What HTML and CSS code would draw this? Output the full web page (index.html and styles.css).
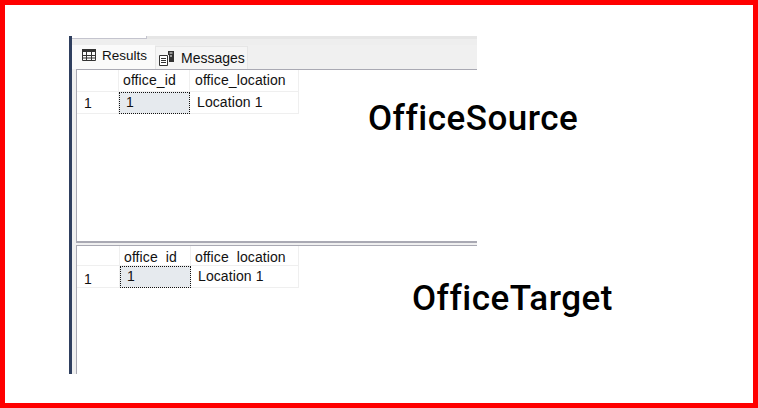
FILE: index.html
```html
<!DOCTYPE html>
<html lang="en">
<head>
    <meta charset="UTF-8">
    <title>OfficeSource and OfficeTarget</title>
    <link rel="stylesheet" href="styles.css">
</head>
<body>
    <div class="frame">
        <div class="window">
            <!-- Tabs -->
            <div class="top-strip"><div class="top-notch"></div></div>
            <div class="tabs">
                <div class="tab active">
                    <svg class="icon" width="14" height="12" viewBox="0 0 14 12">
                        <path d="M0.5 0.5h13v11h-13z" fill="none" stroke="#333"/>
                        <path d="M0 0h14v3h-14z" fill="#333"/>
                        <path d="M0 6.500h14M0 9h14M4.500 0v12M9.500 0v12" stroke="#333" fill="none"/>
                    </svg>
                    <span>Results</span>
                </div>
                <div class="tab">
                    <svg class="icon" width="15" height="15" viewBox="0 0 15 15">
                        <path d="M0.5 4.500h8v10h-8z" fill="#fff" stroke="#333"/>
                        <path d="M2 7.500h5M2 9.500h5M2 11.500h5" stroke="#333" fill="none"/>
                        <path d="M9 0h6v11h-5v-7h-1z" fill="#333"/>
                        <path d="M10.500 2h3M11 5h2" stroke="#fff" fill="none"/>
                    </svg>
                    <span>Messages</span>
                </div>
            </div>

            <!-- OfficeSource -->
            <div class="pane pane-source">
                <div class="grid">
                    <div class="cell head"></div>
                    <div class="cell head">office_id</div>
                    <div class="cell head col-loc">office_location</div>
                    <div class="cell num">1</div>
                    <div class="cell current">1</div>
                    <div class="cell col-loc">Location 1</div>
                </div>
                <h2 class="caption caption-source">OfficeSource</h2>
            </div>

            <!-- OfficeTarget -->
            <div class="pane pane-target">
                <div class="grid grid-target">
                    <div class="cell head"></div>
                    <div class="cell head"><span class="clipped">office_id</span></div>
                    <div class="cell head col-loc"><span class="clipped">office_location</span></div>
                    <div class="cell num">1</div>
                    <div class="cell current">1</div>
                    <div class="cell col-loc">Location 1</div>
                </div>
                <h2 class="caption caption-target">OfficeTarget</h2>
            </div>
        </div>
    </div>
</body>
</html>
```

FILE: styles.css
```css
* {
    margin: 0;
    padding: 0;
    box-sizing: border-box;
}
html, body {
    overflow: hidden;
}
body {
    width: 758px;
    height: 408px;
    background: #fff;
    font-family: 'Liberation Sans', Arial, sans-serif;
    color: #111;
}
.frame {
    width: 758px;
    height: 408px;
    border: 5px solid #ff0000;
    padding: 31px 0 0 64px;
}
.window {
    width: 408px;
    height: 338px;
    border-left: 3px solid #2f3f5f;
    display: flex;
    flex-direction: column;
    background: #f0f0f0;
}
.top-strip {
    height: 9px;
    background: linear-gradient(#e6e6e6 3px, #eeeeee 3px);
}
.top-notch {
    width: 75px;
    height: 3px;
    background: #fff;
    border-right: 1px solid #c4c4ce;
    border-bottom: 1px solid #c4c4ce;
}
.tabs {
    display: flex;
    align-items: flex-end;
    height: 24px;
}
.tab {
    display: flex;
    align-items: center;
    gap: 7px;
    height: 23px;
    padding: 0 2px 0 3px;
    font-size: 14px;
    background: #f5f5f5;
    border: 1px solid #e6e6e6;
    border-bottom: none;
}
.tab.active {
    height: 24px;
    width: 83px;
    padding: 0 0 4px 10px;
    gap: 6px;
    font-size: 13.500px;
    background: #fafafa;
    border: none;
}
.pane {
    display: flex;
    margin-left: 4px;
    background: #fff;
    border: 1px solid #a9a9b3;
    border-right: none;
    border-bottom: none;
}
.pane-source {
    height: 174px;
    border-bottom: 2px solid #a9a9b3;
}
.pane-target {
    margin-top: 2px;
    flex: 1;
}
.grid {
    display: grid;
    grid-template-columns: 42px 71px 109px;
    grid-template-rows: 22px 22px;
    align-self: flex-start;
    width: 222px;
    flex-shrink: 0;
}
.grid-target {
    grid-template-columns: 43px 71px 108px;
    grid-template-rows: 20px 22px;
}
.cell {
    font-size: 14px;
    letter-spacing: 0.1px;
    line-height: 21px;
    padding-left: 7px;
    border-right: 1px solid #efefef;
    border-bottom: 1px solid #efefef;
    color: #111;
}
.head {
    padding-left: 4px;
}
.head.col-loc {
    padding-left: 5px;
}
.grid-target .head {
    line-height: 22px;
}
.grid-target .head.col-loc {
    padding-left: 4px;
}
/* the underscore is cut off in the lower header */
.clipped {
    display: block;
    height: 16px;
    overflow: hidden;
}
.current {
    background: #e6eaee;
    outline: 1px dotted #111;
    outline-offset: -1px;
}
.num {
    line-height: 23px;
}
.grid-target .num {
    line-height: 26px;
}
.caption {
    font-family: Roboto, sans-serif;
    font-weight: 500;
    font-size: 35px;
    letter-spacing: 0.5px;
    line-height: 40px;
    color: #000;
    white-space: nowrap;
}
.caption-source {
    margin: 29px 0 0 69px;
}
.caption-target {
    margin: 33px 0 0 113px;
}
```
